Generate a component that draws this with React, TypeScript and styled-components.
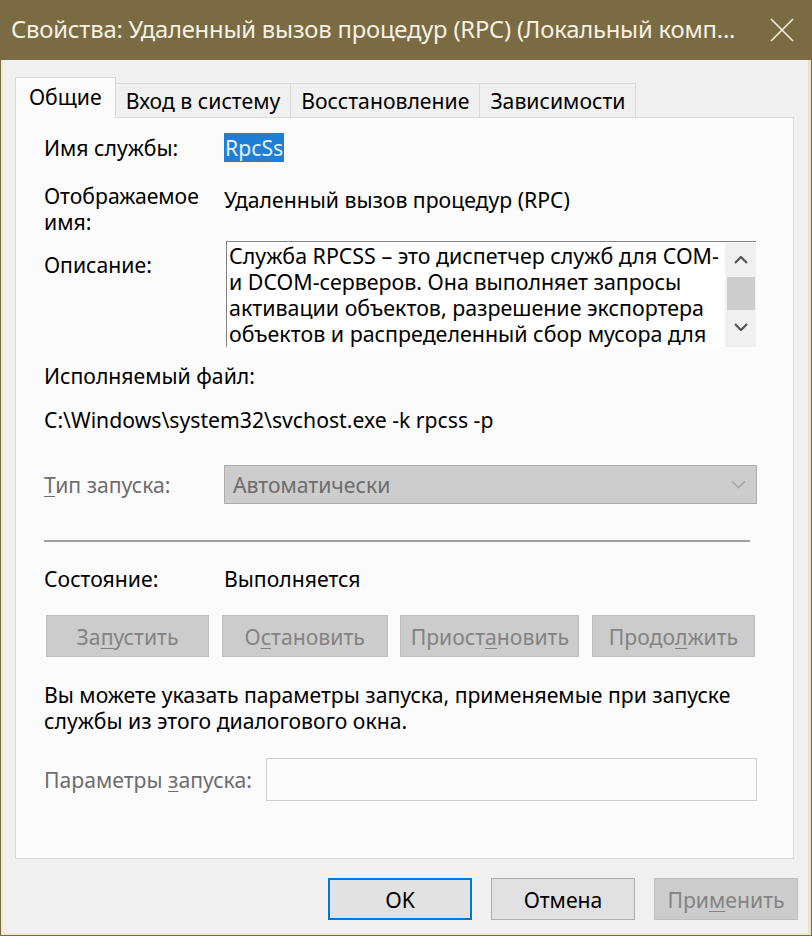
import React from 'react';
import styled, { createGlobalStyle } from 'styled-components';

const GlobalStyle = createGlobalStyle`
  html, body {
    margin: 0;
    padding: 0;
    background: #f0f0f0;
  }
  body {
    font-family: "Noto Sans", "Open Sans", "Liberation Sans", sans-serif;
    font-size: 21.2px;
    color: #000;
  }
`;

// Window frame
const Window = styled.div`
  width: 812px;
  height: 936px;
  box-sizing: border-box;
  display: flex;
  flex-direction: column;
  background: #f0f0f0;
  border: 1px solid #7a6b43;
  border-top: none;
  box-shadow: inset 2px 0 0 #efe9c9, inset -3px 0 0 #e9e3c2, inset 0 -2px 0 #efe9c9;
`;

const TitleBar = styled.div`
  height: 60px;
  flex-shrink: 0;
  background: #7a6b43;
  color: #f5f1e4;
  display: flex;
  align-items: center;
  justify-content: space-between;
  padding: 0 18px 0 11px;
  margin: 0 -1px;
  font-size: 23.8px;
  letter-spacing: -0.2px;
`;

const TitleText = styled.span`
  white-space: nowrap;
  padding-bottom: 2px;
`;

const Body = styled.div`
  flex: 1;
  display: flex;
  flex-direction: column;
  padding: 17px 14px 0 14px;
`;

// Tabs
const TabStrip = styled.div`
  display: flex;
  align-items: flex-end;
  height: 41px;
  margin-bottom: -1px;
  position: relative;
  z-index: 1;
`;

const Tab = styled.div<{ $active?: boolean }>`
  box-sizing: border-box;
  height: ${p => (p.$active ? '41px' : '35px')};
  padding: ${p => (p.$active ? '0 13px 4px' : '0 10px 0')};
  display: flex;
  align-items: center;
  border: 1px solid #d9d9d9;
  border-bottom: ${p => (p.$active ? 'none' : '1px solid #d9d9d9')};
  border-left: ${p => (p.$active ? '1px solid #d9d9d9' : 'none')};
  background: ${p => (p.$active ? '#fbfbfb' : '#f0f0f0')};
  white-space: nowrap;
  &:nth-child(2) {
    border-left: none;
  }
`;

const Panel = styled.div`
  box-sizing: border-box;
  width: 779px;
  height: 742px;
  border: 1px solid #d9d9d9;
  background: #fbfbfb;
  padding: 17px 36px 0 28px;
  display: flex;
  flex-direction: column;
`;

// Panel rows
const Row = styled.div<{ $mt?: number; $align?: string }>`
  display: flex;
  align-items: ${p => p.$align || 'flex-start'};
  margin-top: ${p => p.$mt ?? 0}px;
  line-height: 26px;
`;

const Label = styled.div<{ $disabled?: boolean; $width?: number; $pt?: number }>`
  width: ${p => p.$width ?? 180}px;
  flex-shrink: 0;
  color: ${p => (p.$disabled ? '#6d6d6d' : '#000')};
  padding-top: ${p => p.$pt ?? 0}px;
`;

const Value = styled.div<{ $pt?: number }>`
  padding-top: ${p => p.$pt ?? 0}px;
  white-space: nowrap;
`;

const Selected = styled.span`
  background: #1f7fd6;
  color: #e6f0fb;
  padding: 0 1px;
`;

const Text = styled.div<{ $mt?: number }>`
  line-height: 26px;
  margin-top: ${p => p.$mt ?? 0}px;
  white-space: nowrap;
`;

const Description = styled.div`
  box-sizing: border-box;
  margin-left: 2px;
  width: 530px;
  height: 106px;
  border-top: 1px solid #828282;
  border-left: 1px solid #828282;
  background: #fff;
  display: flex;
  overflow: hidden;
`;

const DescText = styled.div`
  flex: 1;
  padding: 1px 0 0 2px;
  line-height: 26px;
  font-size: 21.4px;
  white-space: nowrap;
  overflow: hidden;
`;

const ScrollBar = styled.div`
  width: 31px;
  flex-shrink: 0;
  margin-top: 1px;
  background: #f0f0f0;
  display: flex;
  flex-direction: column;
  align-items: center;
`;

const ScrollArrow = styled.div`
  height: 34px;
  width: 100%;
  display: flex;
  align-items: center;
  justify-content: center;
  color: #606060;
`;

const ScrollThumb = styled.div`
  width: 28px;
  height: 33px;
  background: #cdcdcd;
`;

const Combo = styled.div`
  box-sizing: border-box;
  width: 533px;
  height: 39px;
  background: #cccccc;
  border: 1px solid #adadad;
  color: #6d6d6d;
  display: flex;
  align-items: center;
  justify-content: space-between;
  padding: 0 10px 0 8px;
`;

const Separator = styled.div`
  height: 2px;
  width: 706px;
  background: #a0a0a0;
  margin-top: 36px;
`;

const ButtonGrid = styled.div`
  display: grid;
  grid-template-columns: 163fr 166fr 179fr 163fr;
  column-gap: 12.5px;
  margin: 23px 0 0 2px;
  width: 709px;
`;

const Button = styled.div<{ $disabled?: boolean; $default?: boolean; $w?: number }>`
  box-sizing: border-box;
  height: 42px;
  ${p => (p.$w ? `width: ${p.$w}px;` : '')}
  display: flex;
  align-items: center;
  justify-content: center;
  background: ${p => (p.$disabled ? '#cccccc' : '#e1e1e1')};
  border: ${p =>
    p.$default ? '2px solid #0078d7' : p.$disabled ? '1px solid #bfbfbf' : '1px solid #adadad'};
  color: ${p => (p.$disabled ? '#838383' : '#000')};
  white-space: nowrap;
`;

const Input = styled.div`
  box-sizing: border-box;
  width: 491px;
  height: 43px;
  background: #fbfbfb;
  border: 1px solid #cfcfcf;
`;

const Footer = styled.div`
  display: flex;
  justify-content: flex-end;
  gap: 19px;
  padding: 19px 0 0;
  margin-right: -1px;
`;

const Acc = styled.span`
  text-decoration: underline;
  text-underline-offset: 3px;
  text-decoration-thickness: 1px;
`;

const CloseIcon = () => (
  <svg width="24" height="24" viewBox="0 0 24 24" fill="none" stroke="#f5f1e4" strokeWidth="1.6">
    <line x1="1" y1="1" x2="23" y2="23" />
    <line x1="23" y1="1" x2="1" y2="23" />
  </svg>
);

const Chevron = ({ up, color = '#555', w = 14, h = 8, sw = 2.2 }: { up?: boolean; color?: string; w?: number; h?: number; sw?: number }) => (
  <svg width={w} height={h} viewBox="0 0 14 8" fill="none" stroke={color} strokeWidth={sw}>
    {up ? <polyline points="1,7 7,1 13,7" /> : <polyline points="1,1 7,7 13,1" />}
  </svg>
);

const App: React.FC = () => {
  return (
    <>
      <GlobalStyle />
      <Window>
        <TitleBar>
          <TitleText>Свойства: Удаленный вызов процедур (RPC) (Локальный комп...</TitleText>
          <CloseIcon />
        </TitleBar>

        <Body>
          <TabStrip>
            <Tab $active>Общие</Tab>
            <Tab>Вход в систему</Tab>
            <Tab>Восстановление</Tab>
            <Tab>Зависимости</Tab>
          </TabStrip>

          <Panel>
            <Row>
              <Label>Имя службы:</Label>
              <Value>
                <Selected>RpcSs</Selected>
              </Value>
            </Row>

            <Row $mt={22}>
              <Label>
                Отображаемое
                <br />
                имя:
              </Label>
              <Value $pt={4}>Удаленный вызов процедур (RPC)</Value>
            </Row>

            <Row $mt={6}>
              <Label $pt={11}>Описание:</Label>
              <Description>
                <DescText>
                  Служба RPCSS – это диспетчер служб для COM-
                  <br />и DCOM-серверов. Она выполняет запросы
                  <br />
                  активации объектов, разрешение экспортера
                  <br />
                  объектов и распределенный сбор мусора для
                </DescText>
                <ScrollBar>
                  <ScrollArrow>
                    <Chevron up />
                  </ScrollArrow>
                  <ScrollThumb />
                  <ScrollArrow>
                    <Chevron />
                  </ScrollArrow>
                </ScrollBar>
              </Description>
            </Row>

            <Text $mt={16}>Исполняемый файл:</Text>
            <Text $mt={18}>C:\Windows\system32\svchost.exe -k rpcss -p</Text>

            <Row $mt={32} $align="center">
              <Label $disabled>
                <Acc>Т</Acc>ип запуска:
              </Label>
              <Combo>
                <span>Автоматически</span>
                <Chevron color="#a5a5a5" w={15} h={9} sw={1.3} />
              </Combo>
            </Row>

            <Separator />

            <Row $mt={24}>
              <Label>Состояние:</Label>
              <Value>Выполняется</Value>
            </Row>

            <ButtonGrid>
              <Button $disabled>
                <span>
                  За<Acc>п</Acc>устить
                </span>
              </Button>
              <Button $disabled>
                <span>
                  О<Acc>с</Acc>тановить
                </span>
              </Button>
              <Button $disabled>
                <span>
                  Приост<Acc>а</Acc>новить
                </span>
              </Button>
              <Button $disabled>
                <span>
                  Продо<Acc>л</Acc>жить
                </span>
              </Button>
            </ButtonGrid>

            <Text $mt={25}>
              Вы можете указать параметры запуска, применяемые при запуске
              <br />
              службы из этого диалогового окна.
            </Text>

            <Row $mt={24} $align="center">
              <Label $disabled $width={222}>
                Параметры <Acc>з</Acc>апуска:
              </Label>
              <Input />
            </Row>
          </Panel>

          <Footer>
            <Button $default $w={144}>OK</Button>
            <Button $w={144}>Отмена</Button>
            <Button $disabled $w={144}>
              <span>
                При<Acc>м</Acc>енить
              </span>
            </Button>
          </Footer>
        </Body>
      </Window>
    </>
  );
};

export default App;
